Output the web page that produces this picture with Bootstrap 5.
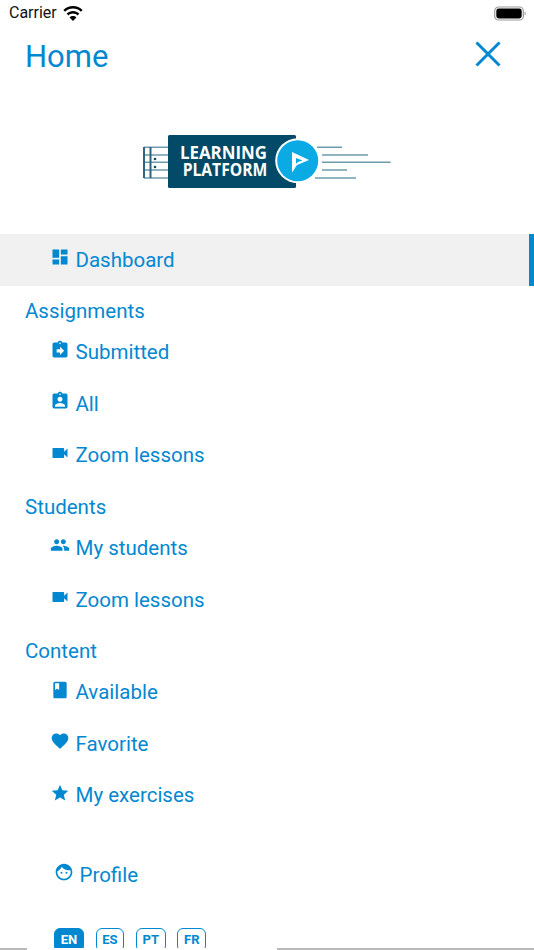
<!DOCTYPE html>
<html lang="en">
<head>
<meta charset="utf-8">
<title>Home</title>
<link rel="stylesheet" href="https://cdn.jsdelivr.net/npm/bootstrap@5.3.0/dist/css/bootstrap.min.css">
<style>
html,body{height:950px;overflow:hidden;background:#fff}
body{font-family:Roboto,sans-serif;color:#0288d1;position:relative}
.status-row{height:26px;padding:0 8px 0 9px;color:#111;font-size:16px;line-height:26px}
.status-row svg{display:block}
.status-group{gap:6px}
.head-row{height:52px;padding:0 33px 0 25px}
.head-title{font-size:31px;line-height:40px;margin:0;font-weight:400;color:#0288d1;padding-top:10px}
.logo-row{height:156px;padding-top:10px}
.nav-line{height:51.6px;padding:0 0 .5px 50px;font-size:20.500px;line-height:28px;color:#0288d1;text-decoration:none}
.nav-line.is-on{background:#f1f1f1;border-right:5px solid #0288d1}
.icon-box{width:20px;height:20px;margin-right:5.500px;flex:none;margin-top:-5px}
.sec-head{height:41px;padding:11.500px 0 0 25px;font-size:20.500px;line-height:28px;margin:0;font-weight:400;color:#0288d1}
.sec-gap{height:27.800px}
.profile-line{padding-left:54px}
.lang-row{padding:27px 0 0 54px;gap:11.500px}
.lang-btn{height:24px;padding:0 5.750px;font-size:13px;font-weight:700;line-height:20px;border:1.5px solid #0288d1;border-radius:6px;color:#0288d1;background:#fff}
.lang-btn.is-on{background:#0288d1;color:#fff}
.home-bar{height:2px;left:0;right:0;bottom:0;background:linear-gradient(90deg,#b8b8b8 0 27px,#fff 27px 277px,#b8b8b8 277px)}
</style>
</head>
<body>
<div class="status-row d-flex align-items-center justify-content-between">
<div class="status-group d-flex align-items-center">
<span>Carrier</span>
<svg width="20" height="15" viewBox="0 0 20 15"><path fill="#000" d="M10 0C6.200 0 3 1.400.4 3.900l1.700 1.900C4.200 3.800 7 2.600 10 2.600s5.800 1.200 7.900 3.200l1.700-1.900C17 1.400 13.800 0 10 0zm0 5C7.600 5 5.400 5.900 3.700 7.500l1.700 1.900C6.600 8.300 8.200 7.600 10 7.600s3.400.7 4.600 1.800l1.700-1.900C14.600 5.900 12.400 5 10 5zm0 5c-1.300 0-2.500.5-3.400 1.400l3.400 3.600 3.400-3.600C12.500 10.500 11.300 10 10 10z"/></svg>
</div>
<svg width="32" height="15" viewBox="0 0 32 15"><rect x=".7" y="1" width="28.600" height="13" rx="3.800" fill="none" stroke="#999" stroke-width="1.200"/><rect x="2.300" y="2.600" width="25.400" height="9.800" rx="2.400" fill="#000"/><path d="M30.500 5.500c.9.300 1.300 1.100 1.300 2s-.4 1.700-1.300 2z" fill="#aaa"/></svg>
</div>
<div class="head-row d-flex align-items-center justify-content-between">
<h1 class="head-title">Home</h1>
<svg class="mt-1" width="26" height="26" viewBox="0 0 26 26"><path d="M1.500 1.500l23 23M24.500 1.500l-23 23" stroke="#0288d1" stroke-width="3" fill="none"/></svg>
</div>
<div class="logo-row d-flex justify-content-center align-items-center">
<svg width="250" height="58" viewBox="0 0 250 58" role="img" aria-label="Learning Platform">
<path fill="none" stroke="#6f9cad" stroke-width="1.500" d="M2 15.300h25M2 23h25M2 30.300h25M2 38h25M2 46h25"/>
<path d="M2 15v31M8.500 15v31" stroke="#2f6580" stroke-width="2"/>
<circle cx="13" cy="27" r="1.300" fill="#0a4b66"/><circle cx="13" cy="35" r="1.300" fill="#0a4b66"/>
<rect x="26" y="3" width="128" height="53" rx="1.500" fill="#024a68"/>
<path fill="none" stroke="#6f9cad" stroke-width="1.500" d="M175 15.300h25M180 23h46M180 30.300h68.700M180 38h25M173 46h41"/>
<circle cx="155.700" cy="28.700" r="22.500" fill="#fff"/><circle cx="155.700" cy="28.700" r="20.500" fill="#0aaae4"/>
<path fill="#fff" fill-rule="evenodd" d="M150 20l17 8-12 5-5 7.500zM154 26v6l1.500-1.800 5-1.700z"/>
<text x="38" y="27" font-family="'Open Sans',sans-serif" font-size="18" font-weight="700" fill="#fff" textLength="87" lengthAdjust="spacingAndGlyphs">LEARNING</text>
<text x="40.700" y="44" font-family="'Open Sans',sans-serif" font-size="18" font-weight="700" fill="#fff" textLength="84.500" lengthAdjust="spacingAndGlyphs">PLATFORM</text>
</svg>
</div>
<nav class="d-flex flex-column">
<a class="nav-line is-on d-flex align-items-center" href="#"><svg class="icon-box" viewBox="0 0 24 24" fill="#0288d1"><path d="M3 13h8V3H3zm0 8h8v-6H3zm10 0h8V11h-8zm0-18v6h8V3z"/></svg>Dashboard</a>
<h2 class="sec-head">Assignments</h2>
<a class="nav-line d-flex align-items-center" href="#"><svg class="icon-box" viewBox="0 0 24 24" fill="#0288d1"><path d="M19 3h-4.200C14.400 1.800 13.300 1 12 1s-2.400.8-2.800 2H5c-1.100 0-2 .9-2 2v14c0 1.100.9 2 2 2h14c1.100 0 2-.9 2-2V5c0-1.100-.9-2-2-2zm-7 0c.6 0 1 .4 1 1s-.4 1-1 1-1-.4-1-1 .4-1 1-1zm0 15v-3H8v-4h4V8l5 5z"/></svg>Submitted</a>
<a class="nav-line d-flex align-items-center" href="#"><svg class="icon-box" viewBox="0 0 24 24" fill="#0288d1"><path d="M19 3h-4.200C14.400 1.800 13.300 1 12 1s-2.400.8-2.800 2H5c-1.100 0-2 .9-2 2v14c0 1.100.9 2 2 2h14c1.100 0 2-.9 2-2V5c0-1.100-.9-2-2-2zm-7 0c.6 0 1 .4 1 1s-.4 1-1 1-1-.4-1-1 .4-1 1-1zm0 4c1.700 0 3 1.300 3 3s-1.300 3-3 3-3-1.300-3-3 1.300-3 3-3zm6 12H6v-1.400c0-2 4-3.100 6-3.100s6 1.100 6 3.100z"/></svg>All</a>
<a class="nav-line d-flex align-items-center" href="#"><svg class="icon-box" viewBox="0 0 24 24" fill="#0288d1"><path d="M17 10.500V7c0-.6-.4-1-1-1H4c-.6 0-1 .4-1 1v10c0 .6.4 1 1 1h12c.6 0 1-.4 1-1v-3.500l4 4v-11z"/></svg>Zoom lessons</a>
<h2 class="sec-head">Students</h2>
<a class="nav-line d-flex align-items-center" href="#"><svg class="icon-box" viewBox="0 0 24 24" fill="#0288d1"><path d="M16 11c1.700 0 3-1.300 3-3s-1.300-3-3-3-3 1.300-3 3 1.300 3 3 3zm-8 0c1.700 0 3-1.300 3-3S9.700 5 8 5 5 6.300 5 8s1.300 3 3 3zm0 2c-2.300 0-7 1.200-7 3.500V19h14v-2.500C15 14.200 10.300 13 8 13zm8 0c-.3 0-.6 0-1 .1 1.200.8 2 2 2 3.400V19h6v-2.500c0-2.300-4.700-3.500-7-3.500z"/></svg>My students</a>
<a class="nav-line d-flex align-items-center" href="#"><svg class="icon-box" viewBox="0 0 24 24" fill="#0288d1"><path d="M17 10.500V7c0-.6-.4-1-1-1H4c-.6 0-1 .4-1 1v10c0 .6.4 1 1 1h12c.6 0 1-.4 1-1v-3.500l4 4v-11z"/></svg>Zoom lessons</a>
<h2 class="sec-head">Content</h2>
<a class="nav-line d-flex align-items-center" href="#"><svg class="icon-box" viewBox="0 0 24 24" fill="#0288d1"><path d="M18 2H6c-1.100 0-2 .9-2 2v16c0 1.100.9 2 2 2h12c1.100 0 2-.9 2-2V4c0-1.100-.9-2-2-2zM6 4h5v8l-2.500-1.500L6 12z"/></svg>Available</a>
<a class="nav-line d-flex align-items-center" href="#"><svg class="icon-box" viewBox="0 0 24 24" fill="#0288d1"><path d="M12 21.400l-1.500-1.400C5.400 15.400 2 12.300 2 8.500 2 5.400 4.400 3 7.500 3c1.700 0 3.400.8 4.500 2.100C13.100 3.800 14.800 3 16.500 3 19.600 3 22 5.400 22 8.500c0 3.800-3.400 6.900-8.500 11.500z"/></svg>Favorite</a>
<a class="nav-line d-flex align-items-center" href="#"><svg class="icon-box" viewBox="0 0 24 24" fill="#0288d1"><path d="M12 17.300l6.200 3.700-1.600-7L22 9.200l-7.200-.6L12 2 9.200 8.600 2 9.200 7.500 14l-1.700 7z"/></svg>My exercises</a>
<div class="sec-gap"></div>
<a class="nav-line profile-line d-flex align-items-center" href="#"><svg class="icon-box" viewBox="0 0 24 24" fill="#0288d1"><path d="M9 11.800a1.200 1.200 0 1 0 0 2.400 1.200 1.200 0 0 0 0-2.400zm6 0a1.200 1.200 0 1 0 0 2.400 1.200 1.200 0 0 0 0-2.400zM12 2C6.500 2 2 6.500 2 12s4.500 10 10 10 10-4.500 10-10S17.500 2 12 2zm0 18c-4.400 0-8-3.600-8-8 0-.3 0-.6.100-.9 2.400-1 4.200-3 5.200-5.300 1.800 2.500 4.700 4.200 8 4.200.8 0 1.500-.1 2.200-.3.200.7.500 1.500.5 2.300 0 4.400-3.600 8-8 8z"/></svg>Profile</a>
<div class="lang-row d-flex">
<button class="btn lang-btn is-on" type="button">EN</button>
<button class="btn lang-btn" type="button">ES</button>
<button class="btn lang-btn" type="button">PT</button>
<button class="btn lang-btn" type="button">FR</button>
</div>
</nav>
<div class="home-bar position-absolute"></div>
<script src="https://cdn.jsdelivr.net/npm/bootstrap@5.3.0/dist/js/bootstrap.bundle.min.js"></script>
</body>
</html>
